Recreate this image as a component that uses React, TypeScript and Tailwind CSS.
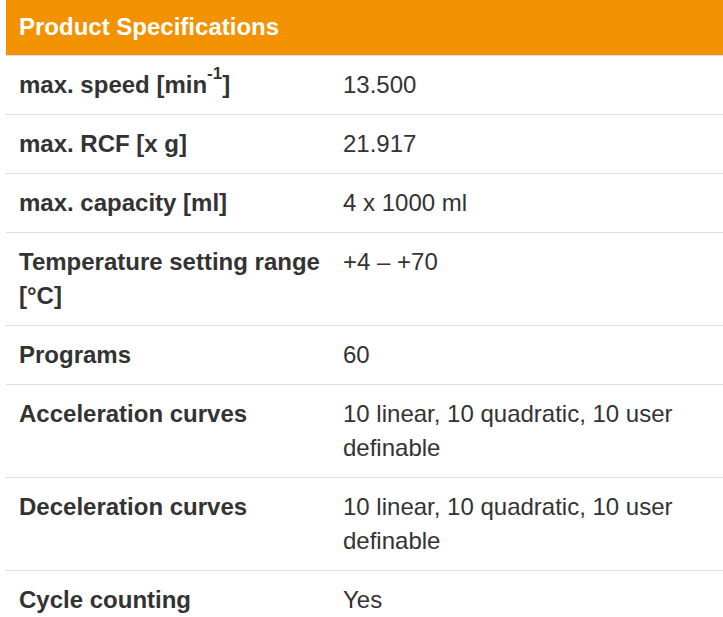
import React from "react";

const rows: { label: React.ReactNode; value: string }[] = [
  { label: <>max. speed [min<sup className="text-[17px] -top-[14px]">-1</sup>]</>, value: "13.500" },
  { label: "max. RCF [x g]", value: "21.917" },
  { label: "max. capacity [ml]", value: "4 x 1000 ml" },
  { label: "Temperature setting range [°C]", value: "+4 – +70" },
  { label: "Programs", value: "60" },
  { label: "Acceleration curves", value: "10 linear, 10 quadratic, 10 user definable" },
  { label: "Deceleration curves", value: "10 linear, 10 quadratic, 10 user definable" },
  { label: "Cycle counting", value: "Yes" },
];

export default function App() {
  return (
    <div className="w-[723px] h-[617px] overflow-hidden bg-white pl-[6px]" style={{ fontFamily: '"Liberation Sans", Arial, sans-serif' }}>
      <div className="bg-[#f39200] text-white font-bold text-[24px] leading-[35px] pl-[13px] pr-[14px] pt-[9px] pb-[11px]">
        Product Specifications
      </div>
      {rows.map((r, i) => (
        <div key={i} className="flex text-[24px] leading-[34px] text-[#333333] border-t border-[#dddddd]">
          <div className="w-[337px] shrink-0 font-bold pl-[13px] pr-[8px] py-[12px]">{r.label}</div>
          <div className="flex-1 pr-[14px] py-[12px]">{r.value}</div>
        </div>
      ))}
    </div>
  );
}
